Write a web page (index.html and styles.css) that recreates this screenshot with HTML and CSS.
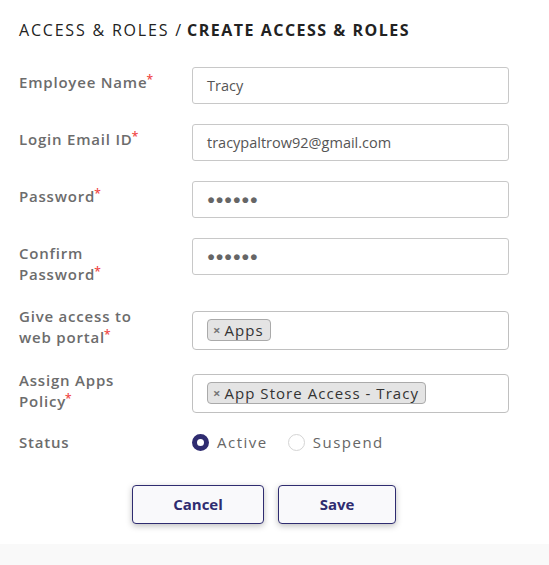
FILE: index.html
```html
<!DOCTYPE html>
<html>
<head>
<meta charset="utf-8">
<link rel="stylesheet" href="styles.css">
</head>
<body>
<div class="card">
  <h1 class="title"><span class="crumb">ACCESS &amp; ROLES /</span> <span class="current">CREATE ACCESS &amp; ROLES</span></h1>
  <form class="form">
    <div class="row r1">
      <label class="label">Employee Name<span class="req">*</span></label>
      <div class="input">Tracy</div>
    </div>
    <div class="row r2">
      <label class="label">Login Email ID<span class="req">*</span></label>
      <div class="input">tracypaltrow92@gmail.com</div>
    </div>
    <div class="row r3">
      <label class="label">Password<span class="req">*</span></label>
      <div class="input dots">●●●●●●</div>
    </div>
    <div class="row r4">
      <label class="label">Confirm<br>Password<span class="req">*</span></label>
      <div class="input dots">●●●●●●</div>
    </div>
    <div class="row r5">
      <label class="label">Give access to<br>web portal<span class="req">*</span></label>
      <div class="multi"><span class="tag"><span class="x">×</span>Apps</span></div>
    </div>
    <div class="row r6">
      <label class="label">Assign Apps<br>Policy<span class="req">*</span></label>
      <div class="multi"><span class="tag"><span class="x">×</span>App Store Access - Tracy</span></div>
    </div>
    <div class="row status">
      <label class="label">Status</label>
      <div class="radios">
        <span class="radio"><span class="circle on"></span>Active</span>
        <span class="radio"><span class="circle"></span>Suspend</span>
      </div>
    </div>
    <div class="actions">
      <button type="button" class="btn cancel">Cancel</button>
      <button type="button" class="btn save">Save</button>
    </div>
  </form>
</div>
</body>
</html>
```
FILE: styles.css
```css
html, body {
  margin: 0;
  padding: 0;
}
body {
  background: #f9f9f9;
  font-family: "Open Sans", "Liberation Sans", sans-serif;
  width: 549px;
  height: 565px;
  overflow: hidden;
}
.card {
  background: #fff;
  padding: 18px 0 20px 19px;
}
.title {
  margin: 0;
  font-size: 16px;
  line-height: 24px;
  color: #222;
}
.title .crumb {
  font-weight: 400;
  letter-spacing: 1.8px;
}
.title .current {
  font-weight: 700;
  letter-spacing: 1.5px;
}
.form {
  margin-top: 25px;
}
.row {
  display: grid;
  grid-template-columns: 173px 317px;
  align-items: start;
}
.label {
  display: block;
  font-size: 15px;
  line-height: 20.5px;
  font-weight: 600;
  color: #6c6c6c;
  letter-spacing: 0.8px;
  margin-top: 5px;
}
.req {
  color: #f04848;
  font-size: 12px;
  line-height: 0;
  position: relative;
  top: -4px;
  margin-left: -1px;
}
.input {
  box-sizing: border-box;
  height: 37px;
  border: 1px solid #c8c8c8;
  border-radius: 3px;
  padding: 0 14px;
  font-size: 14.5px;
  line-height: 35px;
  color: #555;
}
.input.dots {
  font-size: 13.5px;
  letter-spacing: 0.4px;
  color: #666;
}
.r1, .r2, .r3 { margin-bottom: 20px; }
.r4 { margin-bottom: 22px; }
.r5 .label { margin-top: 0; }
.r5 .multi { margin-top: 5px; }
.r5 { margin-bottom: 20px; }
.r6 .label { margin-top: 0; }
.r6 .multi { margin-top: 4px; }
.r6 { margin-bottom: 19px; }
.multi {
  box-sizing: border-box;
  height: 39px;
  border: 1px solid #c0c0c0;
  border-radius: 4px;
  padding: 7px 14px;
  display: flex;
  align-items: flex-start;
}
.tag {
  display: inline-flex;
  align-items: center;
  height: 22px;
  box-sizing: border-box;
  background: #e4e4e4;
  border: 1px solid #aaa;
  border-radius: 4px;
  padding: 0 6px 0 5px;
  font-size: 15px;
  color: #333;
  letter-spacing: 1.05px;
}
.tag .x {
  font-size: 13px;
  font-weight: 700;
  color: #777;
  margin-right: 4px;
  letter-spacing: 0;
}
.status {
  align-items: center;
}
.status .label {
  margin-top: 0;
}
.radios {
  display: flex;
  align-items: center;
  gap: 20px;
}
.radio {
  display: inline-flex;
  align-items: center;
  gap: 8px;
  font-size: 15px;
  line-height: 20px;
  color: #666;
  letter-spacing: 1.5px;
}
.circle {
  box-sizing: border-box;
  width: 17px;
  height: 17px;
  border-radius: 50%;
  border: 1px solid #d4d4d4;
  background: #fff;
}
.circle.on {
  border: 5px solid #2f2c70;
}
.actions {
  display: flex;
  gap: 14px;
  margin-top: 32px;
  margin-left: 113px;
}
.btn {
  box-sizing: border-box;
  height: 39px;
  border: 1px solid #2f2c70;
  border-radius: 4px;
  background: #f9f9fb;
  color: #2f2c70;
  font-family: inherit;
  font-size: 15px;
  font-weight: 700;
  box-shadow: 0 2px 6px rgba(0, 0, 0, 0.25);
}
.cancel { width: 132px; }
.save { width: 118px; }
```
